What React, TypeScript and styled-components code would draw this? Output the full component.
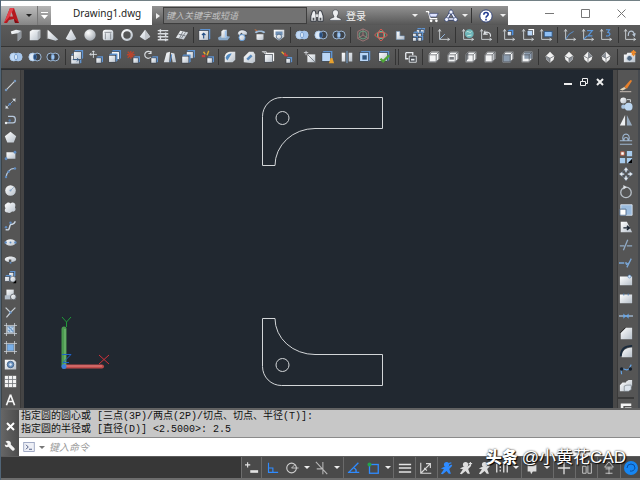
import React from "react";
import styled, { createGlobalStyle, css } from "styled-components";

const Global = createGlobalStyle`
  * { box-sizing: border-box; }
  body { margin: 0; background: #535353; overflow: hidden; }
  button { appearance: none; border: 0; padding: 0; background: none; color: inherit; font: inherit; }
  input { border: 0; outline: 0; padding: 0; min-width: 0; }
`;

const sans = `"Noto Sans", "Noto Sans CJK SC", sans-serif`;

/* ---------- icon drawings, all on a 16 x 16 grid ---------- */

const L = "url(#lit)";
const B = "#9cc3f0";
const D = "#2a2f38";
const W = "#e6eaee";
const BL = "#2f8bff";

const cubePart = (x: number, y: number, s: number, face = L, side = "#5f93d0") => (
  <>
    <path d={`M${x} ${y + 2}l2-2h${s}v${s}l-2 2z`} fill={side} />
    <rect x={x} y={y + 2} width={s} height={s} fill={face} stroke={D} strokeWidth=".7" />
  </>
);
const axes = <path d="M3 2v11h11M1.500 4L3 1.500 4.500 4M12 11.500l2.500 1.500-2.500 1.500" fill="none" stroke="#d4d8dc" />;
const wire = (fill: string, part: string) => (
  <>
    <path d="M2 5.500L5 2h9v8l-3.500 4H2z" fill="#f2f3f4" />
    <path d={part} fill={fill} />
    <path d="M2.500 5.500h8v8h-8zM2.500 5.500L5.500 2.500h8l-3 3M13.500 2.500v8l-3 3" fill="none" stroke="#55585c" strokeWidth=".8" />
  </>
);
const iso = (dark: string) => (
  <>
    <path d="M8 2l5 5-1 4-4 3.500L4 11 3 7z" fill="#f1f1f1" />
    <path d={dark} fill="#8a8f96" />
    <path d="M3.500 7L8 9.500 12.500 7M8 9.500V14" fill="none" stroke="#5c6066" strokeWidth=".8" />
  </>
);
const setOp = (left: string, mid: string, right: string) => (
  <>
    <circle cx="5.500" cy="8" r="4.500" fill={left} stroke="#a9c8ea" />
    <circle cx="10.500" cy="8" r="4.500" fill={right} stroke="#a9c8ea" />
    <path d="M8 4.300a5 5 0 0 1 0 7.400 5 5 0 0 1 0-7.400z" fill={mid} stroke="#5b87bb" strokeWidth=".8" />
  </>
);
const person = (c: string, mark: string) => (
  <>
    <circle cx="7.500" cy="4" r="3" fill={c} />
    <path d="M1 8.500l4-2h4L13 4l1 1.500-3.500 3.500 2 5.500H10l-2.500-3L3 15l-2-.5 3.500-5z" fill={c} />
    <path d={mark} stroke={c} strokeWidth="1.300" fill="none" />
  </>
);

const art: Record<string, React.ReactNode> = {
  polysolid: <><path d="M2 4l6-2 6 1v8l-4 4V6L3 7z" fill={L} /><path d="M10 6l4-3v8l-4 4z" fill="#8f959c" /></>,
  box: <><path d="M2 4l3-2h9v9l-3 3H2z" fill={L} /><path d="M11 4.500l3-2.500v9l-3 3z" fill="#aeb3b9" /></>,
  wedge: <><path d="M2 2l12 11-3 1.500L2 12z" fill={L} /><path d="M2 2v10l-1 1V3z" fill="#aaa" /></>,
  cone: <path d="M8 1l6 11c-2 3-10 3-12 0z" fill={L} />,
  sphere: <circle cx="8" cy="8" r="6.500" fill="url(#ball)" />,
  cylinder: <><rect x="2" y="2" width="12" height="12" rx="3" fill={L} /><path d="M4 5h8M5 6v7M11 6v7" stroke="#83888f" fill="none" /></>,
  torus: <circle cx="8" cy="8" r="5.500" fill="none" stroke={L} strokeWidth="2.500" />,
  pyramid: <><path d="M8 2l6 8-6 4-6-4z" fill={L} /><path d="M8 2l6 8-6 4z" fill="#c0c4c9" /></>,
  helix: <path d="M2 3h12M2 6.500h12M2 10h12M2 13.500h12M5 1.500v4M11 5v4M5 8.500v4M11 12v3" stroke="#d9dce0" strokeWidth="1.700" />,
  planar: <><path d="M6 3l9 2-5 8-9-2z" fill={L} /><path d="M9 4L5 12M12 5L7 12M4 7l8 2" stroke="#72777e" /></>,
  pull: <>{cubePart(1, 1, 11)}<path d="M6.500 12V6M4.500 8l2-2 2 2" stroke="#244f86" fill="none" strokeWidth="1.300" /></>,
  extrude: <><path d="M1 11l5-3 9 2-3 4H2z" fill="#89a9c9" /><path d="M5 4l2-2h4v9H5z" fill={L} /><path d="M9 4l2-2v8l-2 2z" fill={B} /></>,
  sweep: <><path d="M3 7c0-6 9-6 11-2v3H8V6c-2 0-2 1-2 3z" fill={L} stroke={D} strokeWidth=".6" /><circle cx="8" cy="11" r="3.500" fill={L} stroke="#5c9ade" /></>,
  revolve: <><path d="M2 5c1-3 11-3 12 0l-2 1C10 4 6 4 4 6z" fill="#9fbcda" /><path d="M4 7h8v6c-2 1-6 1-8 0z" fill={L} /><path d="M2 2l3 1" stroke="#e57a3b" /></>,
  loft: <><path d="M2 2h12v8l-5 4H7l-5-4z" fill={L} /><path d="M4 4h8v4H4z" fill="#6d8fb5" /><circle cx="8" cy="10" r="3" fill={L} stroke="#4b6786" /></>,
  union: setOp("#c3daf5", "#e6f1fd", "#a5c5ec"),
  subtract: setOp("#dce9f7", "#1f4474", "#3c4148"),
  intersect: setOp("#3c4148", "#a9d0f8", "#3c4148"),
  rot3: <><path d="M8 1l6 3v8l-6 3-6-3V4zM8 8V1M8 8l-6 4M8 8l6 4" stroke="#a87a7a" fill="none" /><circle cx="8" cy="8" r="4.500" fill="none" stroke="#6aa183" /></>,
  gizmo: <><circle cx="8" cy="8" r="4" fill="none" stroke="#59c9a0" strokeWidth="1.300" /><ellipse cx="8" cy="8" rx="7" ry="3" fill="none" stroke="#dd5b52" /><ellipse cx="8" cy="8" rx="3" ry="6.500" fill="none" stroke="#dd5b52" /></>,
  lsolid: <path d="M5 4h4v5h5v4H5z" fill={L} stroke="#7ba4d0" strokeWidth=".6" />,
  array3: <>{cubePart(6, 0, 4)}{cubePart(11, 0, 4)}{cubePart(2, 4, 4)}{cubePart(8, 4, 4)}{cubePart(2, 9, 4)}{cubePart(8, 9, 4)}</>,
  ucs: <>{axes}<path d="M3 13l6-6" stroke={B} /></>,
  ucsWorld: <>{axes}<circle cx="9.500" cy="6.500" r="5" fill="#6db4b8" /><path d="M6 5c2-3 4 2 6-1M7 9l5-1" stroke="#d6f1e4" fill="none" /></>,
  ucsPrev: <>{axes}<path d="M7 3L5.500 7H10M6 7c2-4 8-2 7 3" stroke="#dfe3e7" fill="none" strokeWidth="1.300" /></>,
  ucsFace: <>{axes}{cubePart(6, 2, 5, L, "#4b8fe0")}</>,
  ucsObj: <>{axes}{cubePart(7, 1, 6, "#b9d6f7", "#fff")}</>,
  ucsView: <>{axes}<rect x="6" y="4" width="9" height="6" fill="#8fc0f5" stroke="#315885" /></>,
  ucsOrg: <>{axes}<path d="M3 13l4-6 5-3" stroke="#5a97dc" fill="none" /></>,
  ucsZ: <>{axes}<path d="M7 3h6L8 9h5M3 13l4-4" stroke="#5a97dc" fill="none" strokeWidth="1.300" /></>,
  ucs3: <>{axes}<path d="M8 2h4l-2 3c4 0 3 5-2 4" stroke="#5a97dc" fill="none" strokeWidth="1.300" /></>,
  ucsX: <>{axes}<path d="M6 9c0-7 6-7 7-1M11 7l2 2 1-3" stroke="#b8c5d4" fill="none" strokeWidth="1.300" /></>,
  faceExtrude: <>{cubePart(1, 4, 10)}{cubePart(4, 0, 9)}<path d="M3 11h7M8 9l2 2-2 2" stroke="#315885" fill="none" /></>,
  faceMove: <><path d="M5 1v8M1 5h8M3.500 2.500L5 1l1.500 1.500M2.500 3.500L1 5l1.500 1.500" stroke="#e4e7ea" fill="none" />{cubePart(8, 7, 6)}</>,
  faceOffset: <>{cubePart(5, 0, 9, "#fff", "#4f86c6")}{cubePart(2, 4, 8)}</>,
  faceDelete: <><path d="M2 2l7 7M9 2L2 9M5.500 1v9M1 5.500h9" stroke="#b8452e" strokeWidth="1.600" />{cubePart(8, 7, 6)}</>,
  faceRotate: <><path d="M8 8a4 4 0 1 1 0-5M8 1v3H5" stroke="#d9dde1" fill="none" strokeWidth="1.300" />{cubePart(8, 7, 6)}</>,
  faceTaper: <><path d="M1 14L4 3l4-1-1 12zM9 3l4 1 2 10h-4z" fill={L} /><path d="M8 14L10 5" stroke="#4b8fe0" /></>,
  faceCopy: <>{cubePart(6, 0, 8)}{cubePart(1, 5, 8)}</>,
  faceColor: <><path d="M4 2l2 3M8 6l2-5" stroke="#e1a92c" strokeWidth="1.600" /><path d="M2 7h4" stroke="#cd3d3a" strokeWidth="2.500" />{cubePart(8, 7, 6)}</>,
  edgeFillet: <><path d="M2 14V7c1-4 4-5 7-5h5v9l-3 3z" fill={L} /><path d="M3 9c1-4 4-5 7-5l-5 8z" fill="#538abf" /></>,
  edgeChamfer: <><path d="M2 14V8l6-6h5l2 3v8l-3 2z" fill={L} /><path d="M5 10l5-5 2 2-5 5z" fill="#5988ba" /></>,
  edgeCopy: <><path d="M1 2h5v2M3 2l2 3" stroke="#e4e7ea" fill="none" />{cubePart(4, 3, 9, L, "#f7f7f7")}</>,
  edgeColor: <><path d="M3 2l3 3" stroke="#e1a92c" strokeWidth="1.600" /><path d="M6 6h4M7 3v3" stroke="#cd3d3a" strokeWidth="2" />{cubePart(8, 8, 5)}</>,
  imprint: <><path d="M1 3h5M3.500 1v5" stroke="#d9dde1" /><path d="M5 5h9v9H5z" fill={L} /><path d="M5 5l9 9" stroke="#757b82" /></>,
  clean: <>{cubePart(1, 1, 10, "#b9d6f7")}<path d="M9 15l2-6h2l2 6z" fill="#e7a12f" /></>,
  separate: <><path d="M2 3h4v10H2zM10 3h4v10h-4z" fill={L} /><path d="M8 1v14" stroke="#7fb2e8" /></>,
  shell: <>{cubePart(2, 1, 10, "#b9d6f7")}<rect x="5" y="6" width="5" height="5" fill="#30537c" /></>,
  check: <>{cubePart(2, 1, 10)}<path d="M4 10l3 3 7-7" stroke="#4ea637" fill="none" strokeWidth="2.500" /></>,
  section: <><path d="M2 3h8v3M2 3v7h3" stroke={W} fill="none" strokeWidth="1.500" /><path d="M6 7h8v7H6z" fill="#45494e" stroke={W} /><path d="M8 11h4" stroke={W} strokeWidth="2" /></>,
  vTop: wire("#fff", "M5 2h9l-3 3H2z"),
  vBottom: wire("#777b80", "M4 8h5v3H4z"),
  vLeft: wire("#7d8186", "M2 5l3-3v8l-3 3z"),
  vRight: wire("#c3c6ca", "M11 5l3-3v8l-3 3z"),
  vFront: wire("#8c9cae", "M2 5h9v9H2z"),
  vBack: wire("#8c9cae", "M5 2h9v8H5z"),
  isoSW: iso("M3 7l5 2.500V14L4 11z"),
  isoSE: iso("M8 9.500L12.500 7 12 11l-4 3z"),
  isoNE: iso("M8 2l5 5-5 2z"),
  isoNW: iso("M8 2v7L3 7z"),
  camera: <><path d="M1 5h3l1-2h5l1 2h3v9H1z" fill={L} /><circle cx="7.500" cy="9.500" r="3.300" fill="#4f6780" stroke="#dfe6ed" /><path d="M12 0v7M9 3h6M10 1l4 5M14 1l-4 5" stroke="#ef8b2b" strokeWidth="1.300" /></>,

  line: <><path d="M3 13L13 3" stroke="#cdd3d9" strokeWidth="1.300" /><circle cx="2.500" cy="13.500" r="1.500" fill="#7396be" /><circle cx="13.500" cy="2.500" r="1.500" fill="#7396be" /></>,
  xline: <><path d="M2 14L14 2" stroke="#9fb8d4" /><path d="M10 2h4v4zM2 10v4h4z" fill="#dbe0e5" /><circle cx="7" cy="9" r="1.500" fill="#5989c6" /></>,
  pline: <><path d="M5 3h6c4 0 4 8 0 8H2" stroke="#b7c8dc" fill="none" strokeWidth="1.500" /><circle cx="7" cy="8" r="1.500" fill="#4e79b0" /><circle cx="2.500" cy="11" r="1.500" fill="#e6eaee" /></>,
  polygon: <path d="M8 1l7 5.500-3 7.500H4L1 6.500z" fill={L} />,
  rect: <><rect x="3" y="4" width="11" height="8" fill={L} /><circle cx="2.500" cy="12" r="1.700" fill="#5e8abf" /><circle cx="13.500" cy="4" r="1.700" fill="#5e8abf" /></>,
  arc: <><path d="M2.500 14C3 8 7 3 13 3" stroke="#b7c8dc" fill="none" strokeWidth="1.500" /><circle cx="2.500" cy="13.500" r="1.500" fill="#5e8abf" /><circle cx="5.500" cy="7" r="1.500" fill="#5e8abf" /><circle cx="13.500" cy="3" r="1.500" fill="#5e8abf" /></>,
  circle: <><circle cx="8" cy="8" r="6.500" fill={L} /><path d="M8 8l4-4" stroke="#87a5c6" /><circle cx="8" cy="8" r="1.300" fill="#87a5c6" /></>,
  cloud: <path d="M3 3c1-2 4-1 5 0 2-2 6-1 6 2s-1 2 0 4-1 5-4 4c-2 2-4 2-5 1-4 1-5-3-3-5-1-2-2-5 1-6z" fill={L} />,
  spline: <><path d="M2 13c6 2 4-4 6-6s3 2 6-4" stroke="#c9d4e0" fill="none" strokeWidth="1.800" /><circle cx="2.500" cy="10" r="1.500" fill="#5e8abf" /><circle cx="8" cy="4.500" r="1.500" fill="#5e8abf" /></>,
  ellipse: <><ellipse cx="8" cy="8" rx="6.500" ry="4" fill={L} /><circle cx="2" cy="8" r="1.500" fill="#5e8abf" /><circle cx="14" cy="8" r="1.500" fill="#5e8abf" /><circle cx="8" cy="8" r="1.200" fill="#5e8abf" /></>,
  ellArc: <><path d="M1 8c0-5 14-5 14 0 0 2-3 3-6 3V8H6v3C4 11 1 10 1 8z" fill={L} /><circle cx="8" cy="12" r="1.300" fill="#5e8abf" /></>,
  insert: <>{cubePart(6, 0, 6)}{cubePart(1, 5, 6)}<circle cx="11" cy="10" r="3.500" fill={L} stroke={D} strokeWidth=".5" /><path d="M15 11v4h-4z" fill="#000" /></>,
  block: <><rect x="3" y="2" width="9" height="8" fill={L} /><rect x="1" y="9" width="7" height="5" fill="#b4bfcb" /><circle cx="11.500" cy="11" r="3.500" fill={L} stroke="#52565c" /></>,
  point: <><path d="M2 2l6 6 6-6M8 8l-5 6" stroke="#c9d0d7" fill="none" strokeWidth="1.500" /><circle cx="8" cy="8" r="1.500" fill="#6793c6" /></>,
  hatch: <><path d="M3 0v16M13 0v16M0 3h16M0 13h16" stroke="#cbd2d9" /><path d="M4 4h8v8H4z" fill="#c4daf0" /><path d="M5 5h2v2h2v2h2v2M9 5h2M5 9h2v2" stroke="#4f82b9" fill="none" /></>,
  gradient: <><path d="M3 0v16M13 0v16M0 3h16M0 13h16" stroke="#cbd2d9" /><path d="M4 4h8v8H4z" fill="#79afe8" /></>,
  region: <><path d="M1 2h11l3 3v9H1z" fill={L} /><circle cx="8" cy="8" r="4" fill="#6b94c3" stroke="#36557b" /><circle cx="8" cy="8" r="1.500" fill="#dfe9f4" /></>,
  table: <><rect x="1" y="1" width="14" height="14" fill="#f4f4f4" /><path d="M1 5.500h14M1 10.500h14M5.500 1v14M10.500 1v14" stroke="#707479" /></>,
  mtext: <path d="M8 2L3 15M8 2l5 13M5 10.500h6" stroke="#f5f5f5" strokeWidth="2" fill="none" />,

  erase: <><path d="M6 9L13 1l2 1-6 9z" fill="#e8812b" /><path d="M1 12l5-3 2 2-4 2z" fill="#e3d6b9" /><path d="M1 14.500h13" stroke="#d9cdc4" /></>,
  copy: <><circle cx="5" cy="4" r="3.500" fill={L} /><path d="M9 3h4v3" stroke={W} fill="none" /><circle cx="5" cy="11" r="2.500" fill="#a9c4e0" /><circle cx="11" cy="11" r="4.500" fill="#bcd6f0" /></>,
  mirror: <><path d="M7 1v12H1z" fill="#eef0f2" /><path d="M9 1v12h6z" fill="#96a9bd" /></>,
  offset: <path d="M1 14h14M1 10h4c-4-10 10-10 6 0h4M6 10c-2-5 6-5 4 0z" stroke="#9eb6d0" fill="none" strokeWidth="1.300" />,
  array: <><path d="M2 2h4v4H2z" fill="#fff" stroke="#b3523a" /><path d="M9 1h6v6H9zM1 9h6v6H1zM9 9h6v6H9z" fill="#a7cbee" /><path d="M15 10v5h-5z" fill="#000" /></>,
  move: <path d="M8 0l3 4H9v2H7V4H5zM8 16l-3-4h2v-2h2v2h2zM0 8l4-3v2h2v2H4v2zM16 8l-4 3V9h-2V7h2V5z" fill="#e5eaef" stroke="#3f5979" strokeWidth=".4" />,
  rotate: <><circle cx="8" cy="8.500" r="6" fill="none" stroke="#b8c0c8" strokeWidth="1.500" /><path d="M5 0l4 2.500L5 5z" fill="#dfe3e7" /></>,
  scale: <><path d="M2 2h13v12H2z" fill="#9bbcdf" stroke="#dbe6f1" /><path d="M1 7h7v7H1z" fill="#fff" stroke="#4e6887" /></>,
  stretch: <><path d="M2 2h7l6 12H2z" fill={L} /><path d="M5 9h6M9 6.500L12 9l-3 2.500" stroke="#16202c" fill="none" strokeWidth="1.500" /></>,
  trim: <path d="M1 9h5M9 9h6M10 2L5 14" stroke="#8fa9c4" fill="none" strokeWidth="1.500" />,
  extend: <path d="M0 8h6M7 8h2M9 13l5-10M8 10l3-2" stroke="#7aa6d6" fill="none" strokeWidth="1.500" />,
  breakPt: <><path d="M1 4h14v10H1z" fill={L} /><circle cx="12" cy="4" r="1.700" fill="#d9e8f7" stroke="#4a7fba" strokeWidth=".7" /></>,
  breakTwo: <><path d="M1 4h14v10H1z" fill={L} /><path d="M5 4h1M10 4h1" stroke="#4a7fba" strokeWidth="2.500" /></>,
  join: <><path d="M0 8h16" stroke="#a6bed8" strokeWidth="1.500" /><path d="M5 5l3 3-3 3zM11 5L8 8l3 3z" fill="#65a6ea" /></>,
  chamfer: <><path d="M2 15V8l6-6h7v13z" fill={L} /><path d="M1 8l6-6" stroke="#222" /></>,
  fillet: <><path d="M3 15c0-7 4-11 12-11v11z" fill={L} /><path d="M2 14C2 6 6 2 15 2" stroke="#1b2b3c" fill="none" strokeWidth="2" /></>,
  blend: <><path d="M3 14c-2-10 3-5 6-5s2-1 5-6" stroke="#65a6ea" fill="none" strokeWidth="1.300" /><circle cx="3" cy="8" r="2" fill="#16202c" /><circle cx="13" cy="8" r="2" fill="#16202c" /></>,
  explode: <><path d="M1 7l3-3h5v7l-3 3H1zM8 3l3-2h4v7l-3 2H8z" fill={L} /><path d="M6 8l3-1h5v5l-3 2H6z" fill="#dbe3ec" stroke="#6d747c" strokeWidth=".7" /></>,
  draworder: <><path d="M2 5h12v3H5v6H2z" fill="#f4f4f4" /><path d="M7 10h7v5H7z" fill="#50555b" stroke="#ddd" /></>,

  binoculars: <><path d="M3 2h3l1 5v7H1V8zM13 2h-3L9 7v7h6V8z" fill="#eef0f2" stroke={D} /><path d="M7 6h2v3H7z" fill="#eef0f2" /><path d="M3 10h2v3H3zM11 10h2v3h-2z" fill="#4a4e53" /></>,
  user: <path d="M8 1c3 0 4 2 3.500 5L10 9v1l5 2v2H1v-2l5-2V9L4.500 6C4 3 5 1 8 1z" fill="#eef0f2" stroke={D} strokeWidth=".7" />,
  cart: <><path d="M1 3h3l2 8h8" stroke="#fff" fill="none" strokeWidth="1.500" /><path d="M5 5h10l-2 4H6z" fill="#dfe4ff" stroke="#223268" strokeWidth=".6" /><circle cx="7" cy="13.500" r="1.500" fill="#fff" /><circle cx="13" cy="13.500" r="1.500" fill="#fff" /></>,
  network: <><path d="M8 3l5 8.500H3z" fill="none" stroke="#25366d" strokeWidth="3" /><path d="M8 3l5 8.500H3z" fill="none" stroke="#f1f4ff" strokeWidth="1.700" /><circle cx="8" cy="3.500" r="2.300" fill="#f1f4ff" stroke="#25366d" strokeWidth=".7" /><circle cx="3" cy="12" r="2.300" fill="#f1f4ff" stroke="#25366d" strokeWidth=".7" /><circle cx="13" cy="12" r="2.300" fill="#f1f4ff" stroke="#25366d" strokeWidth=".7" /></>,
  help: <><circle cx="8" cy="8" r="7" fill="#fff" stroke="#2c3f7c" /><path d="M5.500 6.500c0-3.500 5-3 5-.5 0 2-2.500 1.500-2.500 4M8 11v2" stroke="#203a92" fill="none" strokeWidth="1.800" /></>,
  wrench: <path d="M2 2l3 3-1 2-3-1c0 4 3 4 5 3l5 5c2 1 4-1 3-3L9 6c1-3-1-5-4-5z" fill="#f2f2f2" />,
  prompt: <><rect x="1" y="2" width="14" height="12" fill="#eef0f6" stroke="#8793b5" /><path d="M4 5l3 3-3 3M8 11h4" stroke="#4c5981" fill="none" strokeWidth="1.300" /></>,

  infer: <><path d="M0 4.500h6M3 1.500v6" stroke="#e3e3e3" strokeWidth="1.300" /><path d="M6 12h9" stroke="#e3e3e3" strokeWidth="3" /></>,
  ortho: <path d="M4 2v11h11M4 8h5v5" stroke={BL} fill="none" strokeWidth="1.300" />,
  polar: <><circle cx="7.500" cy="8" r="5.500" fill="none" stroke="#cfcfcf" strokeWidth="1.300" /><path d="M7.500 8h8M7.500 8l4-4" stroke="#cfcfcf" /></>,
  isodraft: <path d="M1 1l13 14M9 1v14M2 9h7" stroke="#b8b8b8" fill="none" strokeWidth="1.200" />,
  track: <path d="M2 13L13 2M1 13h13M8 8c2 1 3 3 2 5" stroke={BL} fill="none" strokeWidth="1.500" />,
  osnap: <><rect x="4" y="4" width="10" height="10" fill="none" stroke={BL} strokeWidth="1.500" /><circle cx="4" cy="4" r="2.300" fill="#23a34a" /></>,
  lweight: <path d="M1 4h14M1 8h14M1 12.500h14" stroke="#e4e4e4" strokeWidth="1.600" />,
  dynucs: <path d="M2 2v12h12M2 14L13 3M8 3h5v5M6 8l3 3" stroke="#d8d8d8" fill="none" strokeWidth="1.300" />,
  annoA: person(BL, "M10 3l3-1"),
  annoB: person("#dedede", "M11 3h4M13 1v4"),
  annoC: person("#dedede", "M11 3l2-2"),
  scaleTxt: <path d="M2 3v10M6 6v2M6 10v2M10 3v10M14 3v10" stroke="#dedede" strokeWidth="1.500" />,
  gear: <path d="M3 4h10v8H9l-2 3-1-3H3z" fill="#dedede" />,
  plus: <path d="M8 1v14M1 8h14" stroke="#dedede" strokeWidth="1.500" />,
  isolate: <path d="M3 6h4v8H3zM9 3h4v11H9z" fill="none" stroke="#cfcfcf" />,
  tray: <path d="M8 1l5 6H3zM4 9h8M8 7v8M4 14h8" stroke="#cfcfcf" fill="none" />,
  perf: <><circle cx="8" cy="8" r="7" fill="#1686f2" /><path d="M4 8a4 4 0 0 1 8 0 4 4 0 0 1-5 3" stroke="#0a4c9c" fill="none" /></>,
};

const Drawing = styled.svg<{ $size: number }>`
  display: block;
  flex: none;
  width: ${(p) => p.$size}px;
  height: ${(p) => p.$size}px;
`;
const Icon = ({ name, size = 14 }: { name: string; size?: number }) => (
  <Drawing $size={size} viewBox="0 0 16 16" aria-hidden>{art[name]}</Drawing>
);

/* ---------- frame ---------- */

const Frame = styled.div`
  height: 100vh;
  display: flex;
  flex-direction: column;
  background: #535353;
  border-left: 1px solid #506476;
  font-family: ${sans};
`;
const Gradients = styled.svg`
  display: block;
  flex: none;
  width: 0;
  height: 0;
`;

const TitleBar = styled.header`
  flex: none;
  height: 25px;
  display: flex;
  align-items: flex-end;
  background: #fff;
  border-top: 1px solid #728085;
`;
const center = css`
  display: flex;
  align-items: center;
  justify-content: center;
`;
const AppMenu = styled.button`
  ${center}
  gap: 6px;
  width: 37px;
  height: 19px;
  padding-right: 4px;
  background: linear-gradient(#bdbdbd, #858585);
  border-right: 1px solid #777;
`;
const QuickAccess = styled.button`
  ${center}
  width: 13px;
  height: 19px;
  background: linear-gradient(#b5b5b5, #818181);
`;
const FileTab = styled.div`
  width: 101px;
  height: 24px;
  padding: 4px 0 0 22px;
  font-size: 10px;
  line-height: 16px;
  color: #1d1d1d;
  white-space: nowrap;
`;
const InfoBar = styled.div`
  flex: 0 1 356px;
  height: 19px;
  display: flex;
  align-items: center;
  color: #f2f2f2;
  background: linear-gradient(#929292, #565656);
`;
const Expand = styled.button`
  ${center}
  width: 11px;
  height: 19px;
`;
const Search = styled.input`
  width: 144px;
  height: 17px;
  padding-left: 2px;
  border: 1px solid #3e3e3e;
  background: #727272;
  color: #fff;
  font: italic 9px/14px ${sans};
  &::placeholder { color: #c2c2c2; opacity: 1; }
`;
const InfoButton = styled.button<{ $w: number }>`
  ${center}
  width: ${(p) => p.$w}px;
  height: 19px;
`;
const SignIn = styled.button`
  display: flex;
  align-items: center;
  gap: 4px;
  flex: 1;
  padding: 0 5px 0 2px;
  font-size: 10px;
  line-height: 16px;
  & > :last-child { margin-left: auto; }
`;
const Caret = styled.span<{ $right?: boolean; $c?: string }>`
  display: block;
  border: 3px solid transparent;
  ${(p) => p.$right
    ? css`border-left: 4px solid ${p.$c || "#eee"}; border-right: 0;`
    : css`border-top: 3px solid ${p.$c || "#eee"}; border-bottom: 0;`}
`;
const WindowButtons = styled.div`
  flex: 1;
  display: flex;
  justify-content: flex-end;
  height: 24px;
  padding-right: 1px;
  button { ${center} flex: 0 0 36px; }
`;

/* ---------- horizontal toolbars ---------- */

const ToolRow = styled.div`
  flex: none;
  height: 22px;
  display: flex;
  align-items: stretch;
  padding: 0 1px 1px 6px;
  background: linear-gradient(#5a5a5a, #505050);
  border-bottom: 1px solid #343434;
`;
const ToolGroup = styled.div<{ $n: number }>`
  flex: ${(p) => p.$n} 1 0;
  display: flex;
  min-width: 0;
`;
const Tool = styled.button`
  ${center}
  flex: 1 1 0;
  min-width: 0;
  min-height: 0;
`;
const Divider = styled.span<{ $wide?: boolean }>`
  flex: none;
  align-self: stretch;
  width: ${(p) => (p.$wide ? 4 : 1)}px;
  margin: 2px;
  border-left: 1px solid #343434;
  border-right: ${(p) => (p.$wide ? "1px solid #343434" : 0)};
`;

/* ---------- middle ---------- */

const Middle = styled.div`
  flex: 1;
  min-height: 0;
  display: flex;
  border-top: 1px solid #2a2e33;
`;
const SideBar = styled.aside<{ $side: "left" | "right" }>`
  flex: none;
  display: flex;
  flex-direction: column;
  padding-top: 7px;
  background: #555;
  ${(p) => p.$side === "left"
    ? css`width: 23px; padding-right: 5px; box-shadow: inset -3px 0 #454545, inset -4px 0 #3a3a3a, inset 1px 0 #3c4347;`
    : css`width: 27px; padding-left: 4px; padding-right: 6px; box-shadow: inset 4px 0 #484848, inset 5px 0 #3a3a3a, inset -2px 0 #45494e;`}
`;
const PartialTool = styled.button`
  display: flex;
  justify-content: center;
  height: 11px;
  margin-top: 2px;
  overflow: hidden;
  border-top: 2px solid #3a3a3a;
`;
const Canvas = styled.main`
  position: relative;
  flex: 1;
  min-width: 0;
  background: #212830;
`;
const Model = styled.svg`
  display: block;
  width: 100%;
  height: 100%;
`;
const ChildButtons = styled.div`
  position: absolute;
  top: 5px;
  right: 6px;
  display: flex;
  gap: 2px;
  button { ${center} width: 14px; height: 14px; }
`;

/* ---------- command window ---------- */

const Command = styled.section`
  flex: none;
  display: flex;
  height: 48px;
  border-top: 2px solid #626262;
`;
const Handle = styled.div`
  flex: none;
  width: 18px;
  display: flex;
  flex-direction: column;
  align-items: center;
  justify-content: space-between;
  padding: 12px 0 4px;
  background: linear-gradient(90deg, #666, #4c4c4c);
`;
const Console = styled.div`
  flex: 1;
  min-width: 0;
  display: flex;
  flex-direction: column;
`;
const History = styled.pre`
  margin: 0;
  height: 28px;
  padding: 0 2px;
  background: #c7c7c7;
  border-bottom: 1px solid #8b8b8b;
  color: #111;
  font: 10px/13px "Liberation Mono", "Noto Sans CJK SC", monospace;
  white-space: pre;
  overflow: hidden;
`;
const Prompt = styled.label`
  flex: 1;
  display: flex;
  align-items: center;
  gap: 4px;
  padding-left: 4px;
  background: #fff;
  input { flex: 1; background: none; font: italic 10px/16px ${sans}; }
  input::placeholder { color: #999; opacity: 1; }
`;

/* ---------- status bar ---------- */

const StatusBar = styled.footer`
  position: relative;
  flex: none;
  height: 24px;
  display: flex;
  background: #373737;
  border-top: 1px solid #5c5c5c;
  border-bottom: 2px solid #6d6d6d;
`;
const Spacer = styled.div`
  flex: 240 1 0;
`;
const Toggles = styled.div`
  flex: 399 1 0;
  display: flex;
  background: #4a4a4a;
  border-left: 1px solid #6d6d6d;
`;
const Cell = styled.div<{ $n: number; $drop?: boolean; $line?: boolean }>`
  flex: ${(p) => p.$n} 1 ${(p) => (p.$drop ? 11 : 0)}px;
  display: flex;
  min-width: 0;
  border-right: ${(p) => (p.$line ? "1px solid #6a6a6a" : 0)};
`;
const Drop = styled.button`
  ${center}
  flex: none;
  width: 11px;
`;
const Watermark = styled.div`
  position: absolute;
  right: 14px;
  top: -11px;
  display: flex;
  gap: 4px;
  color: #fff;
  font: 17px/24px "Liberation Sans", "Noto Sans CJK SC", sans-serif;
  text-shadow: 1px 1px 1px #000, 0 0 2px #222;
  white-space: nowrap;
  pointer-events: none;
  b { font-size: 16px; font-weight: 900; }
`;

const row1 = [
  ["polysolid", "box", "wedge", "cone", "sphere", "cylinder", "torus", "pyramid", "helix", "planar"],
  ["pull", "extrude", "sweep", "revolve", "loft"],
  ["union", "subtract", "intersect"],
  ["rot3", "gizmo", "lsolid", "array3"],
  ["ucs"],
  ["ucsWorld", "ucsPrev"],
  ["ucsFace", "ucsObj", "ucsView"],
  ["ucsOrg", "ucsZ", "ucs3"],
  ["ucsX"],
];
const row2 = [
  ["union", "subtract", "intersect"],
  ["faceExtrude", "faceMove", "faceOffset", "faceDelete", "faceRotate", "faceTaper", "faceCopy", "faceColor"],
  ["edgeFillet", "edgeChamfer", "edgeCopy", "edgeColor"],
  ["imprint", "clean", "separate", "shell", "check"],
  ["section"],
  ["vTop", "vBottom", "vLeft", "vRight", "vFront", "vBack"],
  ["isoSW", "isoSE", "isoNE", "isoNW"],
  ["camera"],
];
const drawTools = ["line", "xline", "pline", "polygon", "rect", "arc", "circle", "cloud", "spline", "ellipse", "ellArc", "insert", "block", "point", "hatch", "gradient", "region", "table", "mtext"];
const editTools = ["erase", "copy", "mirror", "offset", "array", "move", "rotate", "scale", "stretch", "trim", "extend", "breakPt", "breakTwo", "join", "chamfer", "fillet", "blend", "explode"];

type StatusCell = { icon: string; n?: number; drop?: boolean; line?: boolean };
const statusCells: StatusCell[] = [
  { icon: "infer", line: true },
  { icon: "ortho" },
  { icon: "polar", drop: true },
  { icon: "isodraft", drop: true, line: true },
  { icon: "track" },
  { icon: "osnap", drop: true, line: true },
  { icon: "lweight", n: 21, line: true },
  { icon: "dynucs", n: 21, line: true },
  { icon: "annoA", n: 19 },
  { icon: "annoB", n: 19 },
  { icon: "annoC", n: 19 },
  { icon: "scaleTxt", n: 17, drop: true, line: true },
  { icon: "gear", n: 21, drop: true, line: true },
  { icon: "plus", n: 21, line: true },
  { icon: "isolate", n: 22, line: true },
  { icon: "tray", n: 22, line: true },
  { icon: "perf", n: 19 },
];

const Toolbar = ({ groups, wideAfter, label }: { groups: string[][]; wideAfter: number; label: string }) => (
  <ToolRow role="toolbar" aria-label={label}>
    {groups.map((g, i) => (
      <React.Fragment key={i}>
        {i > 0 && <Divider $wide={i === wideAfter} />}
        <ToolGroup $n={g.length}>
          {g.map((t) => <Tool key={t} aria-label={t}><Icon name={t} /></Tool>)}
        </ToolGroup>
      </React.Fragment>
    ))}
  </ToolRow>
);

export default function App() {
  return (
    <Frame>
      <Global />
      <Gradients aria-hidden>
        <defs>
          <linearGradient id="lit" x1="0" y1="0" x2="1" y2="1">
            <stop offset="0" stopColor="#ffffff" />
            <stop offset="1" stopColor="#b7c0ca" />
          </linearGradient>
          <radialGradient id="ball" cx=".35" cy=".3" r=".8">
            <stop offset="0" stopColor="#ffffff" />
            <stop offset="1" stopColor="#9ea5ad" />
          </radialGradient>
        </defs>
      </Gradients>

      <TitleBar>
        <AppMenu aria-label="Application menu">
          <Drawing $size={17} viewBox="0 0 17 17" aria-hidden>
            <path d="M1 16L7 1h4l5 15h-4l-1-4-5 1-2 3z" fill="#b5191f" />
            <path d="M7 1h4l-4 8-6 7z" fill="#e2414a" />
            <path d="M8.500 5L10 9.500H7z" fill="#b7a5a5" />
            <path d="M11 12l5 4h-4z" fill="#7f0d14" />
          </Drawing>
          <Caret $c="#222" />
        </AppMenu>
        <QuickAccess aria-label="Quick access">
          <Drawing $size={9} viewBox="0 0 9 9" aria-hidden><path d="M1 1.500h7" stroke="#fff" /><path d="M1 4h7L4.500 8z" fill="#fff" /></Drawing>
        </QuickAccess>
        <FileTab>Drawing1.dwg</FileTab>
        <InfoBar>
          <Expand aria-label="Expand"><Caret $right /></Expand>
          <Search aria-label="搜索" placeholder="键入关键字或短语" />
          <InfoButton $w={20} aria-label="Search"><Icon name="binoculars" /></InfoButton>
          <SignIn>
            <Icon name="user" size={13} />登录<Caret />
          </SignIn>
          <InfoButton $w={18} aria-label="Store"><Icon name="cart" /></InfoButton>
          <InfoButton $w={20} aria-label="Connect"><Icon name="network" /></InfoButton>
          <InfoButton $w={8} aria-label="Connect options"><Caret /></InfoButton>
          <Divider />
          <InfoButton $w={24} aria-label="Help"><Icon name="help" /></InfoButton>
          <InfoButton $w={10} aria-label="Help options"><Caret /></InfoButton>
        </InfoBar>
        <WindowButtons>
          <button aria-label="Minimize"><Drawing $size={9} viewBox="0 0 9 9"><path d="M0 4.500h9" stroke="#777" /></Drawing></button>
          <button aria-label="Maximize"><Drawing $size={9} viewBox="0 0 9 9"><path d="M.5.5h8v8h-8z" stroke="#777" fill="none" /></Drawing></button>
          <button aria-label="Close"><Drawing $size={9} viewBox="0 0 9 9"><path d="M.5.5l8 8M8.500.5l-8 8" stroke="#777" /></Drawing></button>
        </WindowButtons>
      </TitleBar>

      <Toolbar groups={row1} wideAfter={4} label="Modeling" />
      <Toolbar groups={row2} wideAfter={4} label="Solid editing" />

      <Middle>
        <SideBar $side="left" aria-label="Draw">
          {drawTools.map((t) => <Tool key={t} aria-label={t}><Icon name={t} size={13} /></Tool>)}
        </SideBar>
        <Canvas>
          <Model viewBox="0 0 589 338" aria-label="Model space">
            <g fill="none" stroke="#d3d6d8">
              <path d="M258.500 27.500H358.500V58.500H291A40 37 0 0 0 251 95.500H238.500V46.500A19 19 0 0 1 257.500 27.500Z" />
              <circle cx="258.500" cy="48" r="6.500" />
              <path d="M238.500 248.500H251A40 36 0 0 0 291 284.500H358.500V315.500H257.500A19 19 0 0 1 238.500 296.500Z" />
              <circle cx="258.500" cy="295" r="6.500" />
            </g>
            <path d="M40 296V259" stroke="#4c9a50" strokeWidth="5" strokeLinecap="round" />
            <path d="M41 296V259" stroke="#7cc07a" strokeWidth="1" />
            <path d="M42 296.500H78" stroke="#bf4a4a" strokeWidth="4" strokeLinecap="round" />
            <path d="M42 296H78" stroke="#e08380" strokeWidth="1" />
            <circle cx="40" cy="296.500" r="2.500" fill="#3c7fd8" />
            <path d="M38 284.500h9l-8 8h6" stroke="#1f62c8" fill="none" />
            <path d="M38 247l4.500 5 4.500-5M42.500 252v5" stroke="#1f9a38" fill="none" />
            <path d="M75 285l10 9M85 285l-10 9" stroke="#d0303a" fill="none" />
          </Model>
          <ChildButtons>
            <button aria-label="Minimize drawing"><Drawing $size={8} viewBox="0 0 8 8"><path d="M0 6h8" stroke="#eee" strokeWidth="2" /></Drawing></button>
            <button aria-label="Restore drawing"><Drawing $size={8} viewBox="0 0 8 8"><path d="M.5 3.500h5v4h-5zM2.500 3V.5h5v5H6" stroke="#eee" fill="none" /></Drawing></button>
            <button aria-label="Close drawing"><Drawing $size={8} viewBox="0 0 8 8"><path d="M1 1l6 6M7 1L1 7" stroke="#eee" strokeWidth="2" /></Drawing></button>
          </ChildButtons>
        </Canvas>
        <SideBar $side="right" aria-label="Modify">
          {editTools.map((t) => <Tool key={t} aria-label={t}><Icon name={t} /></Tool>)}
          <PartialTool aria-label="draworder"><Icon name="draworder" /></PartialTool>
        </SideBar>
      </Middle>

      <Command>
        <Handle>
          <button aria-label="Close command line"><Drawing $size={9} viewBox="0 0 9 9"><path d="M1 1l7 7M8 1L1 8" stroke="#fff" strokeWidth="2" /></Drawing></button>
          <button aria-label="Customize"><Icon name="wrench" size={12} /></button>
        </Handle>
        <Console>
          <History>{"指定圆的圆心或 [三点(3P)/两点(2P)/切点、切点、半径(T)]:\n指定圆的半径或 [直径(D)] <2.5000>: 2.5"}</History>
          <Prompt>
            <Icon name="prompt" size={12} />
            <Caret $c="#777" />
            <input aria-label="命令" placeholder="键入命令" />
          </Prompt>
        </Console>
      </Command>

      <StatusBar>
        <Spacer />
        <Toggles>
          {statusCells.map((c) => (
            <Cell key={c.icon} $n={c.n ?? 20} $drop={c.drop} $line={c.line}>
              <Tool aria-label={c.icon}><Icon name={c.icon} size={c.icon === "perf" ? 16 : 14} /></Tool>
              {c.drop && <Drop aria-label={`${c.icon} options`}><Caret /></Drop>}
            </Cell>
          ))}
        </Toggles>
        <Watermark><b>头条</b><span>@小黄花CAD</span></Watermark>
      </StatusBar>
    </Frame>
  );
}
